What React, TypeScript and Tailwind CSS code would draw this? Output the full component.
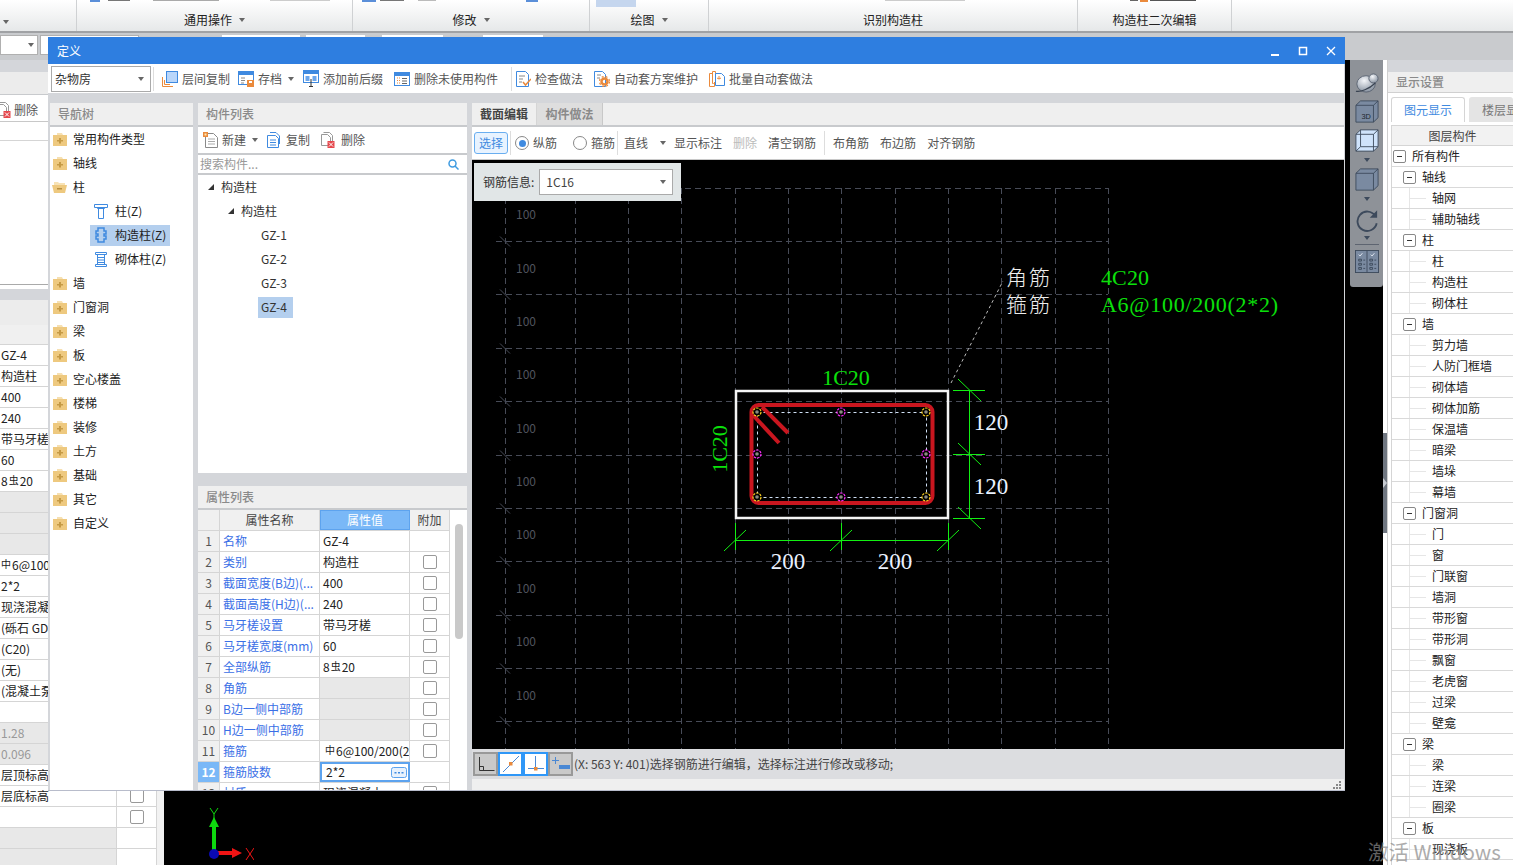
import React from "react";

// 属性表の行データ
const propRows = [
  { name: "名称", value: "GZ-4", check: false },
  { name: "类别", value: "构造柱", check: true },
  { name: "截面宽度(B边)(...", value: "400", check: true },
  { name: "截面高度(H边)(...", value: "240", check: true },
  { name: "马牙槎设置", value: "带马牙槎", check: true },
  { name: "马牙槎宽度(mm)", value: "60", check: true },
  { name: "全部纵筋", value: "C8", check: true },
  { name: "角筋", value: "", check: true, gray: true },
  { name: "B边一侧中部筋", value: "", check: true, gray: true },
  { name: "H边一侧中部筋", value: "", check: true, gray: true },
  { name: "箍筋", value: "A6", check: true },
  { name: "箍筋肢数", value: "2*2", check: false, active: true },
  { name: "材质", value: "现浇混凝土", check: true },
];

const navRows = [
  { label: "常用构件类型" },
  { label: "轴线" },
  { label: "柱", open: true },
  { label: "柱(Z)", sub: "col" },
  { label: "构造柱(Z)", sub: "gz", active: true },
  { label: "砌体柱(Z)", sub: "brick" },
  { label: "墙" },
  { label: "门窗洞" },
  { label: "梁" },
  { label: "板" },
  { label: "空心楼盖" },
  { label: "楼梯" },
  { label: "装修" },
  { label: "土方" },
  { label: "基础" },
  { label: "其它" },
  { label: "自定义" },
];

const layerRows: [string, number][] = [
  ["所有构件", 1],
  ["轴线", 2],
  ["轴网", 3],
  ["辅助轴线", 3],
  ["柱", 2],
  ["柱", 3],
  ["构造柱", 3],
  ["砌体柱", 3],
  ["墙", 2],
  ["剪力墙", 3],
  ["人防门框墙", 3],
  ["砌体墙", 3],
  ["砌体加筋", 3],
  ["保温墙", 3],
  ["暗梁", 3],
  ["墙垛", 3],
  ["幕墙", 3],
  ["门窗洞", 2],
  ["门", 3],
  ["窗", 3],
  ["门联窗", 3],
  ["墙洞", 3],
  ["带形窗", 3],
  ["带形洞", 3],
  ["飘窗", 3],
  ["老虎窗", 3],
  ["过梁", 3],
  ["壁龛", 3],
  ["梁", 2],
  ["梁", 3],
  ["连梁", 3],
  ["圈梁", 3],
  ["板", 2],
  ["现浇板", 3],
];

const backRows = [
  { t: "GZ-4" },
  { t: "构造柱" },
  { t: "400" },
  { t: "240" },
  { t: "带马牙槎" },
  { t: "60" },
  { t: "C8" },
  { t: "", g: true },
  { t: "", g: true },
  { t: "", g: true },
  { t: "A6" },
  { t: "2*2" },
  { t: "现浇混凝土" },
  { t: "(砾石 GD40 中" },
  { t: "(C20)" },
  { t: "(无)" },
  { t: "(混凝土泵送)" },
  { t: "" },
  { t: "1.28", g: true },
  { t: "0.096", g: true },
  { t: "层顶标高" },
  { t: "层底标高" },
  { t: "" },
  { t: "", g: true },
  { t: "", g: true },
];

function Rebar({ kind, n }: { kind: string; n: string }) {
  // 鋼筋記号
  if (kind === "C8")
    return (
      <span className="whitespace-nowrap">
        8<span className="relative top-[-2px] mx-[1px] text-[10px]">虫</span>20
      </span>
    );
  return (
    <span className="whitespace-nowrap">
      <span className="relative top-[-2px] mr-[1px] text-[10px]">中</span>
      {n}
    </span>
  );
}

function Arrow({ className = "" }: { className?: string }) {
  return <span className={"inline-block h-0 w-0 border-x-[3.5px] border-t-[4px] border-x-transparent border-t-[#666] " + className} />;
}

function Folder({ open }: { open?: boolean }) {
  if (open)
    return (
      <svg width="16" height="13" viewBox="0 0 16 13" className="shrink-0">
        <path d="M2 1h4l1 1h6v2H2z" fill="#f7e2b5" />
        <path d="M0 4h15l-2 8H2z" fill="#eec97f" />
        <rect x="5" y="7" width="5" height="1.5" fill="#b78f3f" />
      </svg>
    );
  return (
    <svg width="14" height="13" viewBox="0 0 14 13" className="shrink-0">
      <path d="M4 0h5l1 2H4z" fill="#f6e0b2" />
      <rect x="0" y="2" width="14" height="11" fill="#eec97f" />
      <path d="M6 5h2v2h2v1.5H8v2H6v-2H4V7h2z" fill="#c59a45" />
    </svg>
  );
}

function SubIcon({ kind }: { kind: string }) {
  if (kind === "col")
    return (
      <svg width="14" height="16" viewBox="0 0 14 16" fill="none" stroke="#3f8ae0" className="shrink-0">
        <path d="M.5 1.500h13v3h-13zM3.500 4.500v1h7v-1M4.500 5.500v10h5v-10" />
      </svg>
    );
  if (kind === "gz")
    return (
      <svg width="14" height="16" viewBox="0 0 14 16" fill="none" stroke="#3f8ae0" strokeWidth="1.500" className="shrink-0">
        <path d="M4 1h6v3h2v3h-2v2h2v3h-2v3H4v-3H2V9h2V7H2V4h2z" />
      </svg>
    );
  return (
    <svg width="12" height="16" viewBox="0 0 12 16" fill="none" stroke="#3f8ae0" className="ml-[1px] mr-[1px] shrink-0">
      <path d="M.5 1.500h11v2H.5zM2.500 3.500v10h7v-10M.5 13.500h11v2H.5zM2.500 6.500h7M2.500 9h7M2.500 11.500h7" />
    </svg>
  );
}

// ツールバーのアイコン
function ToolIcon({ kind }: { kind: string }) {
  const blue = "#3f8ae0";
  const orange = "#ea8a3c";
  switch (kind) {
    case "floorcopy":
      return (
        <svg width="16" height="16" viewBox="0 0 16 16" className="shrink-0">
          <rect x="4.500" y=".5" width="11" height="11" fill="#b9d6fa" stroke={blue} />
          <path d="M.5 6v9.500H11" fill="none" stroke={orange} />
          <path d="M2.500 9v4.500H8" fill="none" stroke={orange} />
        </svg>
      );
    case "save":
      return (
        <svg width="16" height="16" viewBox="0 0 16 16" className="shrink-0">
          <rect x=".5" y=".5" width="15" height="13" fill="#fff" stroke={blue} />
          <rect x="1" y="1" width="14" height="3" fill={blue} />
          <path d="M3 7h4M3 9.500h4M3 12h3" stroke="#888" />
          <rect x="9" y="9" width="7" height="7" fill={orange} />
          <rect x="11" y="10" width="3" height="2" fill="#fff" />
        </svg>
      );
    case "prefix":
      return (
        <svg width="16" height="17" viewBox="0 0 16 17" className="shrink-0">
          <rect x=".5" y=".5" width="15" height="12" fill="#fff" stroke={blue} />
          <rect x="1" y="1" width="14" height="3" fill={blue} />
          <rect x="2.500" y="6" width="4" height="5" fill="#6ba6ec" />
          <rect x="9.500" y="6" width="4" height="5" fill="#6ba6ec" />
          <path d="M6 16.500h4M8 9v7" stroke="#333" />
        </svg>
      );
    case "clean":
      return (
        <svg width="16" height="14" viewBox="0 0 16 14" className="shrink-0">
          <rect x=".5" y=".5" width="15" height="13" fill="#fff" stroke={blue} />
          <rect x="1" y="1" width="14" height="3" fill={blue} />
          <path d="M3 6h3M3 8.500h3M3 11h3" stroke={orange} strokeDasharray="1 1" />
          <path d="M8 6.500h5M8 9h5M8 11.500h5" stroke="#666" />
        </svg>
      );
    case "check":
      return (
        <svg width="15" height="16" viewBox="0 0 15 16" className="shrink-0">
          <path d="M.5.5h9l3 3v12H.5z" fill="#fff" stroke={blue} />
          <path d="M3 5h6M3 8h4M3 11h3" stroke="#888" />
          <path d="M7 11l2.500 3L15 8" fill="none" stroke={orange} strokeWidth="1.500" />
        </svg>
      );
    case "auto":
      return (
        <svg width="16" height="16" viewBox="0 0 16 16" className="shrink-0">
          <path d="M.5.5h8l3 3v12H.5z" fill="#fff" stroke={blue} />
          <path d="M3 4h4M3 7h3" stroke="#888" />
          <circle cx="10.500" cy="10.500" r="3" fill="none" stroke={orange} strokeWidth="2.500" />
          <circle cx="10.500" cy="10.500" r="5" fill="none" stroke={orange} strokeWidth="1.200" strokeDasharray="2 2" />
        </svg>
      );
    case "batch":
      return (
        <svg width="16" height="16" viewBox="0 0 16 16" className="shrink-0">
          <path d="M.5 2.500h5v13h-5z" fill="#fff" stroke={orange} />
          <path d="M3.500.5h3v10l-2 2h-1z" fill="#fff" stroke={orange} />
          <path d="M6.500 2.500h6l3 3v9h-9z" fill="#fff" stroke={blue} />
          <path d="M10 5v3l-2-1M10 8l2-1" fill="none" stroke={orange} />
        </svg>
      );
    case "new":
      return (
        <svg width="15" height="16" viewBox="0 0 15 16" className="shrink-0">
          <path d="M2.500 1.500h8l4 4v10h-12z" fill="#fff" stroke="#8a8a8a" />
          <path d="M5 7h7M5 9.500h7M5 12h7" stroke="#aaa" />
          <rect x="0" y="0" width="5" height="5" fill={orange} />
          <rect x="1.500" y="1.500" width="2" height="2" fill="#ffe9b0" />
        </svg>
      );
    case "copy":
      return (
        <svg width="13" height="16" viewBox="0 0 13 16" className="shrink-0">
          <path d="M3 .5h6l3.500 3.500v8" fill="none" stroke={blue} />
          <path d="M.5 3.500h8l3 3v9h-11z" fill="#fff" stroke={blue} />
          <path d="M3 8h6M3 10.500h6M3 13h6" stroke={blue} />
        </svg>
      );
    default:
      return (
        <svg width="14" height="16" viewBox="0 0 14 16" className="shrink-0">
          <path d="M2.500.5h6l3 3v6" fill="none" stroke="#999" />
          <path d="M.5 2.500h6l3 3v8h-9z" fill="#fff" stroke="#999" />
          <rect x="6.500" y="9" width="7" height="7" fill="#e5484d" />
          <path d="M8 10.500l4 4M12 10.500l-4 4" stroke="#fff" />
        </svg>
      );
  }
}

function Tool({ kind, label, className = "" }: { kind: string; label: string; className?: string }) {
  return (
    <div className={"flex shrink-0 items-center gap-[4px] text-[#555] " + className}>
      <ToolIcon kind={kind} />
      <span className="whitespace-nowrap">{label}</span>
    </div>
  );
}

function CheckBox() {
  return <span className="block h-[14px] w-[14px] rounded-[2px] border border-[#999] bg-white" />;
}

function Radio({ on }: { on?: boolean }) {
  return (
    <span className="flex h-[14px] w-[14px] items-center justify-center rounded-full border border-[#888] bg-white">
      {on && <span className="h-[7px] w-[7px] rounded-full bg-[#3f8ae0]" />}
    </span>
  );
}

function LayerRow({ label, level }: { label: string; level: number }) {
  return (
    <div className="flex h-[21px] items-center border-b border-[#d9d9d9] text-[#222]">
      {level === 3 ? (
        <>
          <span className="ml-[17px] flex h-full w-[17px] items-center border-l border-[#e6e6e6]">
            <span className="h-px w-full bg-[#e6e6e6]" />
          </span>
          <span className="ml-[6px] whitespace-nowrap">{label}</span>
        </>
      ) : (
        <>
          <span className={"flex h-[13px] w-[13px] items-center justify-center rounded-[2px] border border-[#888] bg-white " + (level === 1 ? "ml-[1px]" : "ml-[11px]")}>
            <span className="h-px w-[5px] bg-[#333]" />
          </span>
          <span className="ml-[6px] whitespace-nowrap">{label}</span>
        </>
      )}
    </div>
  );
}

function SectionHead({ children, className = "" }: { children: React.ReactNode; className?: string }) {
  return <div className={"flex h-[24px] shrink-0 items-center border-b-2 border-[#c8cacd] bg-[#efefef] px-[8px] font-medium text-[#8a8a8a] " + className}>{children}</div>;
}

// 断面エディタの図面
function Drawing() {
  const xs = [505, 575, 628, 681, 735, 788, 841, 895, 948, 1001, 1055, 1108];
  const ys = [241.5, 294.5, 348.5, 401.5, 455.5, 508.5, 561.5, 615.5, 668.5, 721.5];
  const grid = "#474b57";
  const green = "#12f012";
  const labelY = [214, 268, 321, 374, 428, 481, 534, 588, 641, 695];
  const bars = [
    [757, 412, "#ffd21f"],
    [926, 412, "#ffd21f"],
    [757, 497, "#ffd21f"],
    [926, 497, "#ffd21f"],
    [841, 412, "#ff2cff"],
    [841, 497, "#ff2cff"],
    [757, 454, "#ff2cff"],
    [926, 454, "#ff2cff"],
  ] as const;
  return (
    <svg viewBox="472 160 872 589" className="block h-full w-full">
      <g stroke={grid} strokeDasharray="6 4" fill="none">
        {xs.map((x) => (
          <line key={x} x1={x + 0.5} y1={188} x2={x + 0.5} y2={749} />
        ))}
        <line x1={505} y1={188.5} x2={1108} y2={188.5} />
        {ys.map((y) => (
          <line key={y} x1={496} y1={y} x2={1108} y2={y} />
        ))}
      </g>
      <g stroke={grid}>
        {[188, ...ys].map((y) => (
          <line key={y} x1={500} y1={y - 5} x2={510} y2={y + 5} />
        ))}
      </g>
      {labelY.map((y) => (
        <text key={y} x={516} y={y + 5} fill="#50545e" fontSize="12" fontFamily="'Noto Sans CJK SC',sans-serif">
          100
        </text>
      ))}
      <rect x={736} y={391} width={212} height={127} fill="none" stroke="#f4f4f4" strokeWidth="2.500" />
      <rect x={757.5} y={412.5} width={169} height={85} fill="none" stroke="#cfe0f5" strokeDasharray="3 3" />
      <rect x={751.500} y={405} width={181} height={98} rx={7} fill="none" stroke="#c9161f" strokeWidth="4" />
      <path d="M752 414l27 29M762 407l26 26" stroke="#c9161f" strokeWidth="4" fill="none" />
      {bars.map(([cx, cy, c]) => (
        <g key={`${cx}-${cy}`}>
          <circle cx={cx} cy={cy} r="4" fill="#000" stroke={c} strokeWidth="1.200" strokeDasharray="2.500 1" />
          <circle cx={cx} cy={cy} r="1.800" fill="#8a8a80" />
        </g>
      ))}
      <line x1={951} y1={383} x2={1003} y2={281} stroke="#bbb" strokeDasharray="3 3" />
      <g stroke={green} fill="none">
        <line x1={735} y1={540.500} x2={948} y2={540.500} />
        <path d="M735.500 523v27M841.500 523v27M948.500 523v27M724 551l22-21M830 551l22-21M937 551l22-21" />
        <line x1={969.500} y1={390} x2={969.500} y2={518} />
        <path d="M953 390.500h32M953 454.500h32M953 518.500h32M958 379l23 22M958 443l23 22M958 507l23 22" />
      </g>
      <g fontFamily="'Liberation Serif',serif">
        <text x={846} y={385} textAnchor="middle" fill="#0be00b" fontSize="22">
          1C20
        </text>
        <text x={0} y={0} transform="translate(727 449) rotate(-90)" textAnchor="middle" fill="#0be00b" fontSize="22">
          1C20
        </text>
        <text x={788} y={569} textAnchor="middle" fill="#eaf2ff" fontSize="23">
          200
        </text>
        <text x={895} y={569} textAnchor="middle" fill="#eaf2ff" fontSize="23">
          200
        </text>
        <text x={991} y={430} textAnchor="middle" fill="#eaf2ff" fontSize="23">
          120
        </text>
        <text x={991} y={494} textAnchor="middle" fill="#eaf2ff" fontSize="23">
          120
        </text>
        <text x={1101} y={285} fill="#0be00b" fontSize="22" textLength={48}>
          4C20
        </text>
        <text x={1101} y={312} fill="#0be00b" fontSize="22" textLength={177} lengthAdjust="spacing">
          A6@100/200(2*2)
        </text>
      </g>
      <g fontFamily="'Noto Sans CJK SC',sans-serif" fontSize="21" fill="#eeeeee" fontWeight="300">
        <text x={1006} y={285} textLength={44}>
          角筋
        </text>
        <text x={1006} y={312} textLength={44}>
          箍筋
        </text>
      </g>
    </svg>
  );
}

function Dock() {
  const s = "#3d4a5c";
  const darrow = "mt-[6px] !border-t-[#3d4a5c]";
  return (
    <div className="flex h-[227px] w-[33px] shrink-0 flex-col items-center rounded-b-[3px] bg-[#8e9298] pt-[13px]">
      <svg width="24" height="20" viewBox="0 0 26 22" preserveAspectRatio="none">
        <defs>
          <radialGradient id="ball" cx="0.4" cy="0.3" r="0.8">
            <stop offset="0" stopColor="#f4f6f9" />
            <stop offset="1" stopColor="#7b8796" />
          </radialGradient>
        </defs>
        <ellipse cx="12" cy="12" rx="10" ry="9" fill="url(#ball)" stroke="#5b6472" />
        <circle cx="20" cy="6" r="5" fill="url(#ball)" stroke="#5b6472" />
        <path d="M1 20c5 1 14-2 21-9" fill="none" stroke="#394351" strokeWidth="1.200" />
      </svg>
      <svg width="24" height="23" viewBox="0 0 26 26" preserveAspectRatio="none" className="mt-[7px]">
        <path d="M1 6l5-5h19v19l-5 5H1z" fill="#7a8aa1" stroke={s} />
        <path d="M1 6h19v19M20 6l5-5" fill="none" stroke={s} />
        <text x="7" y="22" fontSize="8" fill="#20262f" fontFamily="'Liberation Sans',sans-serif">
          3D
        </text>
      </svg>
      <svg width="24" height="23" viewBox="0 0 26 26" preserveAspectRatio="none" className="mt-[6px]">
        <path d="M1 6l5-5h19v19l-5 5H1z" fill="#cfe3fb" stroke={s} />
        <path d="M1 6h19v19M20 6l5-5M6 1v19h19M6 20l-5 5" fill="none" stroke={s} />
      </svg>
      <Arrow className={darrow} />
      <svg width="24" height="23" viewBox="0 0 26 26" preserveAspectRatio="none" className="mt-[6px]">
        <path d="M1 6l5-5h19v19l-5 5H1z" fill="#7a8aa1" stroke={s} />
        <path d="M1 6h19v19M20 6l5-5" fill="none" stroke={s} />
      </svg>
      <Arrow className={darrow} />
      <svg width="24" height="25" viewBox="0 0 26 26" className="mt-[7px]">
        <path d="M22 8a10.500 10.500 0 1 0 1.500 8" fill="none" stroke={s} strokeWidth="2" />
        <path d="M24 2v8h-8z" fill={s} />
      </svg>
      <Arrow className="mt-[3px] !border-t-[#3d4a5c]" />
      <div className="mt-[4px] h-px w-[24px] bg-[#5d6470]" />
      <svg width="24" height="23" viewBox="0 0 26 25" preserveAspectRatio="none" className="mt-[5px]">
        <rect x=".5" y=".5" width="25" height="24" fill="#7a8aa1" stroke={s} />
        <path d="M13 1v23" stroke={s} />
        <path d="M4 5l1.500 1.500L8 3.500M17 5l1.500 1.500L21 3.500" stroke="#e7edf5" fill="none" />
        <path d="M4 10h3v2H4zM4 14.500h3v2H4zM4 19h3v2H4zM16 10h3v2h-3zM16 14.500h3v2h-3zM16 19h3v2h-3z" fill="none" stroke={s} />
        <path d="M9 11h2M9 15.500h2M9 20h2M21 11h2M21 15.500h2M21 20h2" stroke={s} />
      </svg>
    </div>
  );
}

export default function App() {
  return (
    <div className="relative flex h-[865px] w-[1513px] flex-col overflow-hidden bg-[#c9cbce] font-['Noto_Sans_CJK_SC','Liberation_Sans',sans-serif] text-[12px] text-[#333]">
      {/* リボン */}
      <div className="relative flex h-[33px] shrink-0 border-b-2 border-[#a0a2a5] bg-gradient-to-b from-[#ffffff] to-[#e6e8e9] text-[12px] text-[#222]">
        <svg width="1231" height="8" className="absolute left-0 top-0">
          <rect x="90" y="0" width="10" height="2" fill="#5b8fd9" />
          <rect x="108" y="0" width="22" height="1" fill="#777" />
          <rect x="153" y="0" width="66" height="1" fill="#aaa" />
          <rect x="270" y="0" width="60" height="1" fill="#ccc" />
          <rect x="362" y="0" width="14" height="2" fill="#5b8fd9" />
          <rect x="380" y="0" width="24" height="1" fill="#777" />
          <rect x="418" y="0" width="18" height="1" fill="#bbb" />
          <rect x="526" y="0" width="12" height="2" fill="#5b8fd9" />
          <rect x="596" y="0" width="40" height="7" fill="#c5d6ee" />
          <rect x="885" y="0" width="80" height="1" fill="#ccc" />
          <rect x="1130" y="0" width="8" height="1" fill="#666" />
          <rect x="1140" y="0" width="8" height="2" fill="#ea8a3c" />
          <rect x="1150" y="0" width="46" height="1" fill="#555" />
        </svg>
        <div className="flex w-[76px] items-end pb-[7px] pl-[3px]">
          <Arrow />
        </div>
        {[
          { w: "w-[276px]", t: "通用操作", a: true },
          { w: "w-[237px]", t: "修改", a: true },
          { w: "w-[119px]", t: "绘图", a: true },
          { w: "w-[369px]", t: "识别构造柱", a: false },
          { w: "w-[154px]", t: "构造柱二次编辑", a: false },
        ].map((s) => (
          <div key={s.t} className={"flex items-end justify-center gap-[7px] border-l border-[#cfd1d3] pb-[2px] " + s.w}>
            <span className="leading-[18px]">{s.t}</span>
            {s.a && <Arrow className="mb-[7px]" />}
          </div>
        ))}
        <div className="flex-1 border-l border-[#cfd1d3]" />
      </div>

      {/* 第二ツールバー */}
      <div className="flex h-[27px] shrink-0 items-start pt-[2px]">
        <div className="flex h-[20px] w-[38px] items-center justify-end border border-[#b0b0b0] bg-white pr-[3px]">
          <Arrow />
        </div>
        <div className="ml-[2px] h-[20px] w-[99px] border border-[#b0b0b0] bg-white" />
        <div className="ml-[83px] h-[3px] w-[78px] bg-white" />
        <div className="ml-[6px] h-[3px] w-[59px] bg-white" />
        <div className="ml-[17px] h-[3px] w-[61px] bg-white" />
        <div className="ml-[40px] h-[3px] w-[60px] bg-white" />
      </div>

      {/* 背面のメイン領域 */}
      <div className="flex min-h-0 flex-1">
        <div className="flex w-[157px] shrink-0 flex-col overflow-hidden border-r border-[#d5d5d5] bg-white">
          <div className="h-[12px] shrink-0 bg-[#d4d6da]" />
          <div className="h-[23px] shrink-0 border-b border-[#c8cacd] bg-[#ececec]" />
          <div className="h-[27px] shrink-0 border-b border-[#c8c8c8] pl-[1px] pt-[6px] text-[#555]">
            <div className="flex items-center gap-[3px]">
              <span className="-ml-[4px]">
                <ToolIcon kind="del" />
              </span>
              删除
            </div>
          </div>
          <div className="h-[19px] shrink-0 border-b border-[#d5d5d5]" />
          <div className="h-[144px] shrink-0 border-b border-[#aaa]" />
          <div className="mt-[4px] h-[11px] shrink-0 bg-[#d4d6da]" />
          <div className="h-[25px] shrink-0 bg-[#ececec]" />
          <div className="h-[20px] shrink-0 border-b border-[#d5d5d5] bg-[#f0f0f0] text-right">属性名称</div>
          {backRows.map((r, i) => (
            <div key={i} className="flex h-[21px] shrink-0 border-b border-[#d5d5d5]">
              <div className={"w-[117px] overflow-hidden whitespace-nowrap border-r border-[#d5d5d5] pl-[1px] leading-[20px] " + (r.g ? "bg-[#e8e8e8] text-[#999]" : "text-[#222]")}>
                {r.t === "C8" ? <Rebar kind="C8" n="" /> : r.t === "A6" ? <Rebar kind="A" n="6@100/200(2*2)" /> : r.t}
              </div>
              <div className="flex flex-1 items-center justify-center">{i > 19 && i < 23 && <CheckBox />}</div>
            </div>
          ))}
        </div>
        <div className="w-[7px] shrink-0 bg-[#f2f2f2]" />
        <div className="relative flex flex-1 justify-end bg-black">
          <Dock />
          <svg width="60" height="60" viewBox="0 0 60 60" className="absolute bottom-0 left-[30px]">
            <path d="M20 47V18" stroke="#0ed80e" strokeWidth="4" />
            <path d="M15 22l5-10 5 10z" fill="#0ed80e" />
            <path d="M16 3l4 6 4-6M20 9v5" fill="none" stroke="#0ed80e" />
            <path d="M20 48h22" stroke="#f01414" strokeWidth="4" />
            <path d="M38 43l10 5-10 5z" fill="#f01414" />
            <path d="M52 43l8 12M60 43l-8 12" stroke="#f01414" />
            <circle cx="20" cy="49" r="5" fill="#0a0ab4" />
          </svg>
        </div>
        {/* スプリッタ */}
        <div className="flex w-[4px] shrink-0 flex-col bg-white">
          <div className="h-[373px]" />
          <div className="flex h-[100px] items-center justify-end bg-[#6f7680]">
            <span className="h-0 w-0 border-y-[5px] border-l-[4px] border-y-transparent border-l-[#c8ccd2]" />
          </div>
        </div>
        {/* 表示設定パネル */}
        <div className="flex w-[126px] shrink-0 flex-col border-l border-[#cfcfcf] bg-white">
          <div className="h-[12px] shrink-0 bg-[#d4d6da]" />
          <div className="flex h-[21px] shrink-0 items-center border-b border-[#d0d0d0] bg-[#efefef] pl-[8px] font-medium text-[#8a8a8a]">显示设置</div>
          <div className="mt-[4px] flex h-[25px] shrink-0 pl-[3px]">
            <div className="flex w-[74px] items-center justify-center rounded-t-[3px] border border-b-0 border-[#d5d5d5] text-[#3f8ae0]">图元显示</div>
            <div className="ml-[4px] flex-1 overflow-hidden whitespace-nowrap rounded-t-[3px] bg-[#e4e4e4] pl-[13px] leading-[25px] text-[#777]">楼层显示</div>
          </div>
          <div className="ml-[3px] mt-[3px] flex-1 border-l border-[#d5d5d5]">
            <div className="flex h-[21px] items-center justify-center border-b border-t border-[#d5d5d5] bg-[#f2f2f2] text-[#444]">图层构件</div>
            {layerRows.map(([t, l], i) => (
              <LayerRow key={i} label={t} level={l} />
            ))}
          </div>
        </div>
      </div>

      {/* 定义ウィンドウ */}
      <div className="absolute left-[48px] top-[37px] flex h-[754px] w-[1297px] flex-col overflow-hidden border-b border-[#b8bccb] bg-[#d4d6da]">
        <div className="flex h-[27px] shrink-0 items-center bg-[#2e7ee0] pl-[9px] text-white">
          <span className="flex-1">定义</span>
          <svg width="74" height="12" viewBox="0 0 74 12">
            <path d="M0 10h8" stroke="#fff" strokeWidth="2" />
            <rect x="28.500" y="2.500" width="7" height="7" fill="none" stroke="#fff" strokeWidth="1.500" />
            <path d="M56 2l8 8M64 2l-8 8" stroke="#fff" strokeWidth="1.300" />
          </svg>
        </div>
        <div className="mr-[1px] flex h-[29px] shrink-0 items-center bg-white">
          <div className="ml-[3px] flex h-[26px] w-[100px] items-center justify-between border border-[#aaa] px-[3px]">
            <span>杂物房</span>
            <Arrow className="mr-[3px]" />
          </div>
          <div className="ml-[2px] h-[24px] w-px bg-[#ddd]" />
          <Tool kind="floorcopy" label="层间复制" className="ml-[8px]" />
          <Tool kind="save" label="存档" className="ml-[8px]" />
          <Arrow className="ml-[6px]" />
          <Tool kind="prefix" label="添加前后缀" className="ml-[9px]" />
          <Tool kind="clean" label="删除未使用构件" className="ml-[11px]" />
          <div className="ml-[13px] h-[24px] w-px bg-[#ddd]" />
          <Tool kind="check" label="检查做法" className="ml-[4px]" />
          <Tool kind="auto" label="自动套方案维护" className="ml-[11px]" />
          <Tool kind="batch" label="批量自动套做法" className="ml-[11px]" />
        </div>

        <div className="flex min-h-0 flex-1 gap-[5px] pl-[2px] pr-[1px] pt-[10px]">
          {/* 导航树 */}
          <div className="flex w-[143px] shrink-0 flex-col">
            <SectionHead>导航树</SectionHead>
            <div className="flex-1 bg-white">
              {navRows.map((r) =>
                r.sub ? (
                  <div key={r.label} className="flex h-[24px] items-center pl-[40px]">
                    <div className={"flex h-[21px] items-center gap-[4px] pl-[4px] pr-[4px] text-[#222] " + (r.active ? "bg-[#b4cfee]" : "")}>
                      <SubIcon kind={r.sub} />
                      <span className="ml-[3px]">{r.label}</span>
                    </div>
                  </div>
                ) : (
                  <div key={r.label} className="flex h-[24px] items-center gap-[6px] pl-[3px] text-[#222]">
                    <span className="flex w-[14px] justify-center">
                      <Folder open={r.open} />
                    </span>
                    {r.label}
                  </div>
                ),
              )}
            </div>
          </div>

          {/* 构件列表 + 属性列表 */}
          <div className="flex w-[269px] shrink-0 flex-col">
            <SectionHead>构件列表</SectionHead>
            <div className="flex h-[28px] shrink-0 items-center border-b-2 border-[#c8cacd] bg-white">
              <Tool kind="new" label="新建" className="ml-[5px]" />
              <Arrow className="ml-[6px]" />
              <Tool kind="copy" label="复制" className="ml-[9px] !gap-[6px]" />
              <Tool kind="del" label="删除" className="ml-[11px] !gap-[6px]" />
            </div>
            <div className="flex h-[20px] shrink-0 items-center justify-between border-b-2 border-[#c8cacd] bg-white pl-[2px] pr-[8px] text-[#999]">
              搜索构件...
              <svg width="11" height="11" viewBox="0 0 11 11" fill="none" stroke="#3f9be0" strokeWidth="1.500">
                <circle cx="4.500" cy="4.500" r="3.500" />
                <path d="M7 7l3.500 3.500" />
              </svg>
            </div>
            <div className="h-[298px] shrink-0 bg-white text-[#333]">
              <div className="flex h-[24px] items-center pl-[10px]">
                <span className="h-0 w-0 border-b-[6px] border-l-[6px] border-b-[#333] border-l-transparent" />
                <span className="ml-[7px]">构造柱</span>
              </div>
              <div className="flex h-[24px] items-center pl-[30px]">
                <span className="h-0 w-0 border-b-[6px] border-l-[6px] border-b-[#333] border-l-transparent" />
                <span className="ml-[7px]">构造柱</span>
              </div>
              {["GZ-1", "GZ-2", "GZ-3", "GZ-4"].map((g) => (
                <div key={g} className="flex h-[24px] items-center pl-[60px]">
                  <span className={"flex h-[21px] items-center pl-[3px] pr-[6px] " + (g === "GZ-4" ? "bg-[#b4cfee]" : "")}>{g}</span>
                </div>
              ))}
            </div>
            <div className="h-[13px] shrink-0" />
            <SectionHead>属性列表</SectionHead>
            <div className="flex min-h-0 flex-1 overflow-hidden bg-white">
              <div className="w-[252px] shrink-0">
                <div className="flex h-[21px] border-b border-[#d5d5d5] bg-[#f0f0f0] text-[#444]">
                  <div className="w-[22px] border-r border-[#d5d5d5]" />
                  <div className="flex w-[100px] items-center justify-center border-r border-[#d5d5d5]">属性名称</div>
                  <div className="flex w-[90px] items-center justify-center border border-[#5da3ee] bg-[#7ab8f7] text-white">属性值</div>
                  <div className="flex w-[40px] items-center justify-center border-r border-[#d5d5d5]">附加</div>
                </div>
                {propRows.map((r, i) => (
                  <div key={r.name} className="flex h-[21px] shrink-0 border-b border-[#d5d5d5]">
                    <div className={"flex w-[22px] items-center justify-center border-r border-[#d5d5d5] " + (r.active ? "bg-[#7ab8f7] font-bold text-white" : "bg-[#f0f0f0] text-[#555]")}>{i + 1}</div>
                    <div className="flex w-[100px] items-center overflow-hidden whitespace-nowrap border-r border-[#d5d5d5] pl-[3px] text-[#3a6fe6]">{r.name}</div>
                    {r.active ? (
                      <div className="flex w-[90px] items-center justify-between border-2 border-[#5da3ee] bg-white pl-[4px] pr-[1px] text-[#222]">
                        {r.value}
                        <svg width="16" height="11" viewBox="0 0 16 11">
                          <rect x=".5" y=".5" width="15" height="10" rx="2" fill="#e8f2fd" stroke="#5da3ee" />
                          <path d="M3.500 5h2v1.500h-2zM7 5h2v1.500H7zM10.500 5h2v1.500h-2z" fill="#3f8ae0" />
                        </svg>
                      </div>
                    ) : (
                      <div className={"flex w-[90px] items-center overflow-hidden border-r border-[#d5d5d5] pl-[3px] text-[#222] " + (r.gray ? "bg-[#e8e8e8]" : "")}>
                        {r.value === "C8" ? <Rebar kind="C8" n="" /> : r.value === "A6" ? <span className="pl-[2px]"><Rebar kind="A" n="6@100/200(2*2)" /></span> : r.value}
                      </div>
                    )}
                    <div className="flex w-[40px] items-center justify-center border-r border-[#d5d5d5]">{r.check && <CheckBox />}</div>
                  </div>
                ))}
              </div>
              <div className="flex-1 pl-[5px] pt-[14px]">
                <div className="h-[115px] w-[8px] rounded-[4px] bg-[#c9c9c9]" />
              </div>
            </div>
          </div>

          {/* 截面编辑 */}
          <div className="flex min-w-0 flex-1 flex-col">
            <div className="flex h-[24px] shrink-0 border-b-2 border-[#c8cacd] bg-[#efefef] font-bold">
              <div className="flex w-[65px] items-center justify-center border-r border-[#d5d5d5] text-[#444]">截面编辑</div>
              <div className="flex w-[66px] items-center justify-center border-r border-[#c8c8c8] bg-[#dedede] text-[#8a8a8a]">构件做法</div>
            </div>
            <div className="flex h-[33px] shrink-0 items-center border-b border-[#c8c8c8] bg-white text-[#555]">
              <div className="ml-[2px] flex h-[22px] w-[34px] items-center justify-center rounded-[3px] border border-[#69aef0] bg-[#e8f3ff] text-[#3f8ae0]">选择</div>
              <div className="ml-[2px] h-[24px] w-px bg-[#ddd]" />
              <div className="ml-[4px] flex items-center gap-[4px]">
                <Radio on />
                纵筋
              </div>
              <div className="ml-[16px] flex items-center gap-[4px]">
                <Radio />
                箍筋
              </div>
              <div className="ml-[2px] h-[24px] w-px bg-[#ddd]" />
              <span className="ml-[6px]">直线</span>
              <Arrow className="ml-[12px]" />
              <span className="ml-[8px]">显示标注</span>
              <span className="ml-[11px] text-[#bbb]">删除</span>
              <span className="ml-[11px]">清空钢筋</span>
              <div className="ml-[8px] h-[24px] w-px bg-[#ddd]" />
              <span className="ml-[8px]">布角筋</span>
              <span className="ml-[11px]">布边筋</span>
              <span className="ml-[11px]">对齐钢筋</span>
            </div>
            <div className="relative h-[589px] shrink-0 bg-black">
              <Drawing />
              <div className="absolute left-[2px] top-[3px] flex h-[38px] w-[207px] items-center bg-[#e1e6e7] pl-[9px] text-[#333]">
                钢筋信息:
                <div className="ml-[5px] flex h-[26px] w-[134px] items-center justify-between border border-[#aaa] bg-white px-[6px] text-[#444]">
                  1C16
                  <Arrow />
                </div>
              </div>
            </div>
            <div className="flex h-[30px] shrink-0 items-center bg-[#dcdde0] pl-[1px] text-[#444]">
              <div className="flex h-[24px] w-[25px] items-center justify-center border-2 border-[#999] bg-[#c9c9c9]">
                <svg width="18" height="14" viewBox="0 0 18 14" fill="none" stroke="#333">
                  <path d="M2.500 0v13.500h15M2.500 9.500h4v4" />
                </svg>
              </div>
              <div className="flex h-[24px] w-[25px] items-center justify-center border-2 border-[#2f97f7] bg-white">
                <svg width="18" height="18" viewBox="0 0 18 18" fill="none">
                  <path d="M1 17L17 1" stroke="#4a88d4" />
                  <rect x="7" y="7" width="3.500" height="3.500" fill="#ea8a3c" />
                </svg>
              </div>
              <div className="flex h-[24px] w-[25px] items-center justify-center border-2 border-[#2f97f7] bg-white">
                <svg width="18" height="18" viewBox="0 0 18 18" fill="none">
                  <path d="M1 13.500h16M8.500 1v12" stroke="#4a88d4" />
                  <rect x="7" y="12" width="3.500" height="3.500" fill="#ea8a3c" />
                </svg>
              </div>
              <div className="flex h-[24px] w-[25px] items-center justify-center border-2 border-[#999] bg-[#c9c9c9]">
                <svg width="20" height="18" viewBox="0 0 20 18" fill="none">
                  <path d="M1 5.500h7M4.500 2v7" stroke="#4a88d4" />
                  <rect x="8" y="10" width="11" height="4" fill="#4a88d4" />
                </svg>
              </div>
              <span className="ml-[1px] whitespace-nowrap">(X: 563 Y: 401)选择钢筋进行编辑，选择标注进行修改或移动;</span>
            </div>
            <div className="flex h-[11px] shrink-0 items-end justify-end bg-[#efefef] pb-[1px] pr-[3px]">
              <svg width="8" height="8" viewBox="0 0 8 8" fill="#888">
                <path d="M6 0h2v2H6zM3 3h2v2H3zM6 3h2v2H6zM0 6h2v2H0zM3 6h2v2H3zM6 6h2v2H6z" />
              </svg>
            </div>
          </div>
        </div>
      </div>

      {/* Windows 水印 */}
      <div className="pointer-events-none absolute left-[1368px] top-[838px] whitespace-nowrap text-[20.5px] leading-[26px] text-[#8a8a8a] opacity-70">激活 Windows</div>
    </div>
  );
}
